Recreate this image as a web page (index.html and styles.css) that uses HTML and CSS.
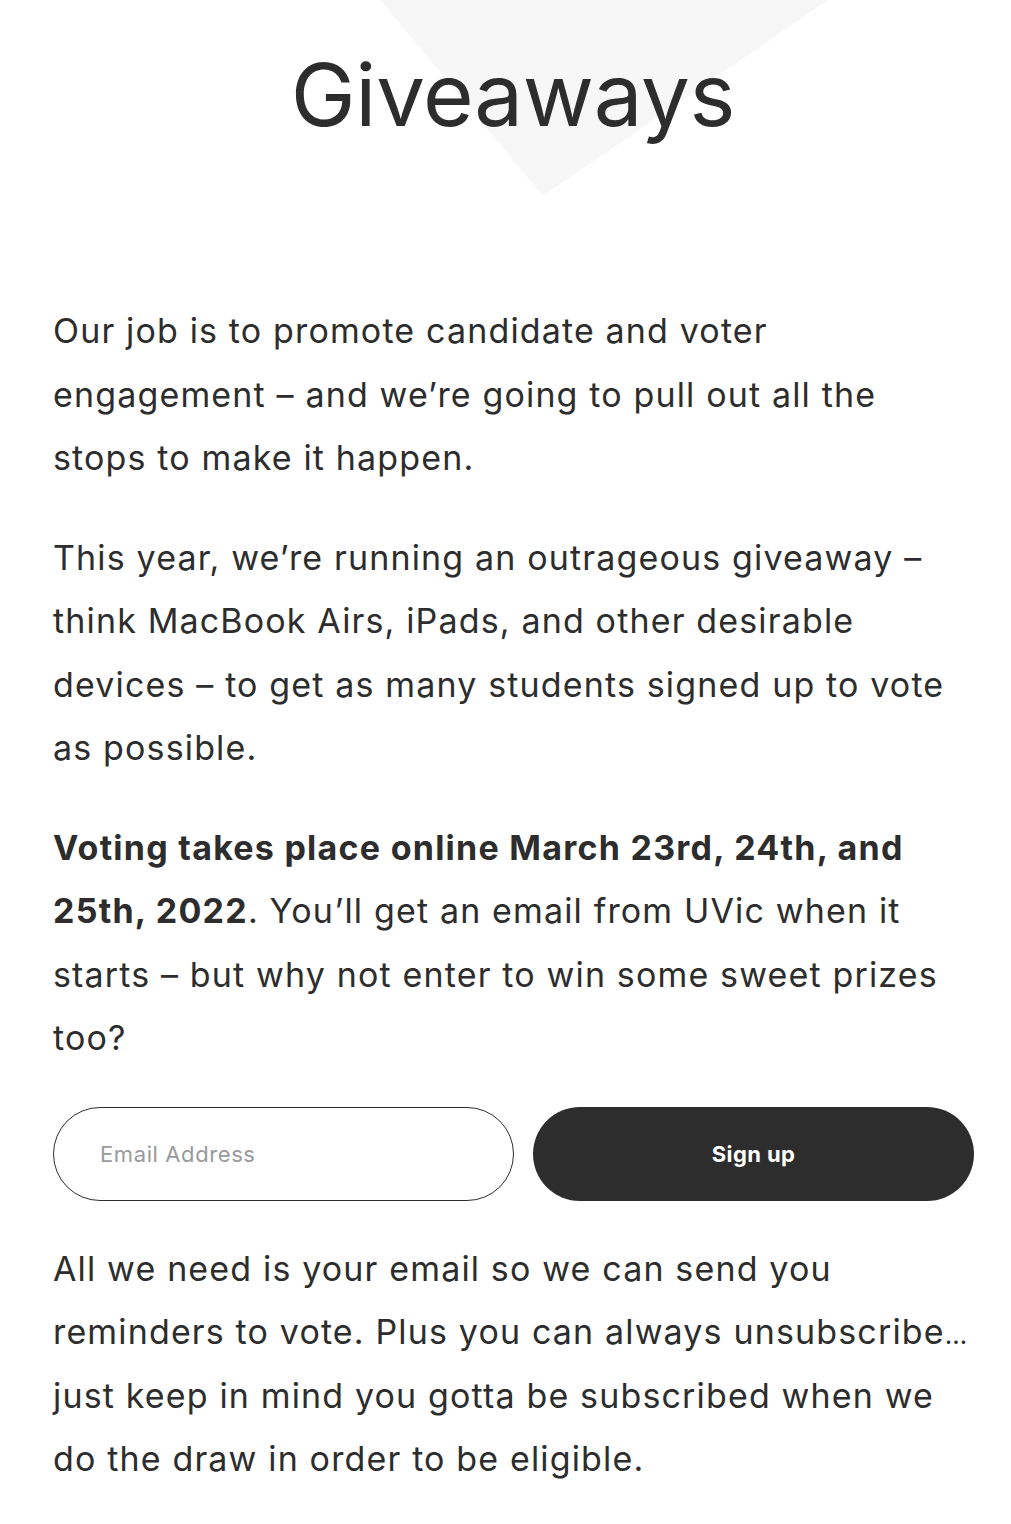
FILE: index.html
```html
<!DOCTYPE html>
<html lang="en">
<head>
<meta charset="utf-8">
<title>Giveaways</title>
<link rel="stylesheet" href="styles.css">
</head>
<body>
<div class="page">
  <div class="hero-shape" aria-hidden="true"></div>
  <div class="container">
    <header class="hero">
      <h1 class="title">Giveaways</h1>
    </header>
    <main class="content">
      <p class="text">Our job is to promote candidate and voter<br>engagement – and we’re going to pull out all the<br>stops to make it happen.</p>
      <p class="text">This year, we’re running an outrageous giveaway –<br>think MacBook Airs, iPads, and other desirable<br>devices – to get as many students signed up to vote<br>as possible.</p>
      <p class="text"><strong class="strong">Voting takes place online March 23rd, 24th, and<br>25th, 2022</strong>. You’ll get an email from UVic when it<br>starts – but why not enter to win some sweet prizes<br>too?</p>
      <form class="signup" onsubmit="return false;">
        <input class="signup-input" type="email" placeholder="Email Address">
        <button class="signup-button" type="submit">Sign up</button>
      </form>
      <p class="text">All we need is your email so we can send you<br>reminders to vote. Plus you can always unsubscribe<span class="ellipsis">…</span><br>just keep in mind you gotta be subscribed when we<br>do the draw in order to be eligible.</p>
    </main>
  </div>
</div>
</body>
</html>
```
FILE: styles.css
```css
html, body {
  margin: 0;
  padding: 0;
  background: #ffffff;
}

body {
  font-family: Inter, "Noto Sans", sans-serif;
  color: #2d2d2d;
}

.page {
  position: relative;
  overflow: hidden;
}

.hero-shape {
  position: absolute;
  left: 380px;
  top: 0;
  width: 448px;
  height: 196px;
  background: #f7f7f7;
  clip-path: polygon(0 0, 100% 0, 36.4% 100%);
}

.container {
  position: relative;
  margin-left: 53px;
  width: 920px;
}

.hero {
  height: 262px;
  display: flex;
  justify-content: center;
}

.title {
  margin: 43px 0 0;
  font-size: 87px;
  line-height: 104px;
  height: 104px;
  font-weight: 400;
  letter-spacing: -0.3px;
  color: #2d2d2d;
}

.content {
  padding-top: 37px;
  display: flex;
  flex-direction: column;
  gap: 36px;
}

.text {
  margin: 0;
  font-size: 34px;
  line-height: 63.5px;
  font-weight: 400;
  letter-spacing: 1.15px;
  white-space: nowrap;
}

.strong {
  font-weight: 700;
  letter-spacing: 1.25px;
}

.ellipsis {
  font-size: 26px;
  line-height: 1;
  letter-spacing: 0;
}

.signup {
  display: grid;
  grid-template-columns: 461px 441px;
  column-gap: 19px;
  height: 94px;
  margin-top: 1px;
}

.signup-input {
  box-sizing: border-box;
  height: 94px;
  border: 1px solid #2d2d2d;
  border-radius: 47px;
  padding: 0 0 0 46px;
  font-family: Inter, "Noto Sans", sans-serif;
  font-size: 22px;
  letter-spacing: 0.6px;
  color: #2d2d2d;
  background: #ffffff;
  outline: none;
}

.signup-input::placeholder {
  color: #9a9a9a;
}

.signup-button {
  height: 94px;
  border: none;
  border-radius: 47px;
  background: #2d2d2d;
  color: #ffffff;
  font-family: Inter, "Noto Sans", sans-serif;
  font-size: 22px;
  font-weight: 700;
  letter-spacing: 0.4px;
  cursor: pointer;
}
```
